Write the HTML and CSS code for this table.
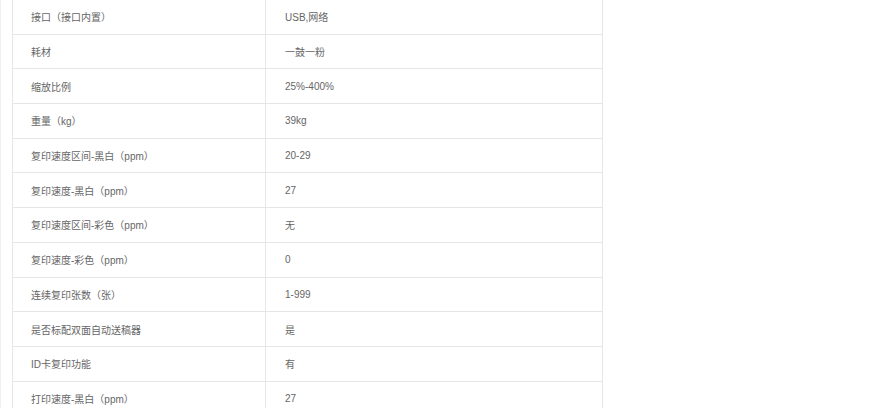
FILE: index.html
```
<!DOCTYPE html>
<html lang="zh-CN">
<head>
    <meta charset="UTF-8">
    <meta name="viewport" content="width=device-width, initial-scale=1.0">
    <title>规格参数</title>
    <link rel="stylesheet" href="styles.css">
</head>
<body>
    <div class="page">
        <!-- Product specification table -->
        <table class="spec-table">
            <tr><td>接口（接口内置）</td><td>USB,网络</td></tr>
            <tr><td>耗材</td><td>一鼓一粉</td></tr>
            <tr><td>缩放比例</td><td>25%-400%</td></tr>
            <tr><td>重量（kg）</td><td>39kg</td></tr>
            <tr><td>复印速度区间-黑白（ppm）</td><td>20-29</td></tr>
            <tr><td>复印速度-黑白（ppm）</td><td>27</td></tr>
            <tr><td>复印速度区间-彩色（ppm）</td><td>无</td></tr>
            <tr><td>复印速度-彩色（ppm）</td><td>0</td></tr>
            <tr><td>连续复印张数（张）</td><td>1-999</td></tr>
            <tr><td>是否标配双面自动送稿器</td><td>是</td></tr>
            <tr><td>ID卡复印功能</td><td>有</td></tr>
            <tr><td>打印速度-黑白（ppm）</td><td>27</td></tr>
        </table>
    </div>
</body>
</html>
```

FILE: styles.css
```
/* Basic page styling */
body {
    margin: 0;
    background: #fff;
    font-family: "Liberation Sans", "Noto Sans CJK SC", sans-serif;
    font-size: 10px;
    color: #666;
}

/* Wrapper with the faint left rule */
.page {
    padding-left: 12px;
    border-left: 1px solid #f0f0f0;
    margin-top: -1px;
}

/* Spec table */
.spec-table {
    width: 591px;
    margin-left: -1px;
    border-collapse: collapse;
}

.spec-table td {
    height: 34.7px;
    padding: 0 0 0 18px;
    border: 1px solid #e6e6e6;
    box-sizing: border-box;
    vertical-align: middle;
}

.spec-table td:first-child {
    width: 253px;
}

.spec-table td:last-child {
    padding-left: 19px;
}
```
